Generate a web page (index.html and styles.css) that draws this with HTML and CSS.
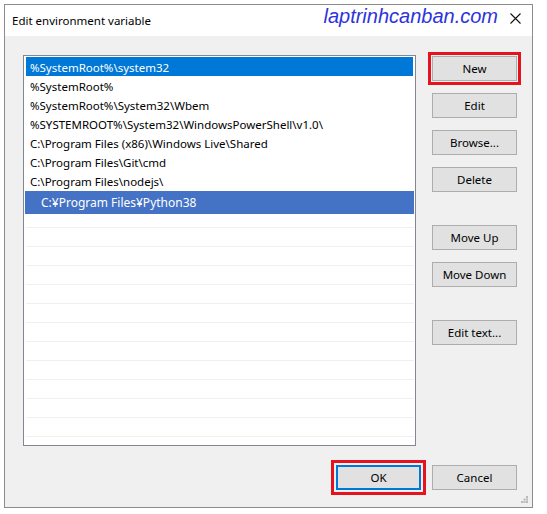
FILE: index.html
```html
<!DOCTYPE html>
<html>
<head>
<meta charset="utf-8">
<link rel="stylesheet" href="styles.css">
</head>
<body>
<div class="window">
  <div class="titlebar">
    <span class="title">Edit environment variable</span>
    <span class="watermark">laptrinhcanban.com</span>
    <svg class="close" width="11" height="11" viewBox="0 0 11 11"><path d="M0.5 0.5 L10.5 10.5 M10.5 0.5 L0.5 10.5" stroke="#111" stroke-width="1.1" fill="none"/></svg>
  </div>
  <div class="body">
    <div class="main">
      <div class="list">
        <div class="row selected">%SystemRoot%\system32</div>
        <div class="row">%SystemRoot%</div>
        <div class="row">%SystemRoot%\System32\Wbem</div>
        <div class="row">%SYSTEMROOT%\System32\WindowsPowerShell\v1.0\</div>
        <div class="row">C:\Program Files (x86)\Windows Live\Shared</div>
        <div class="row">C:\Program Files\Git\cmd</div>
        <div class="row">C:\Program Files\nodejs\</div>
        <div class="row editing">C:¥Program Files¥Python38</div>
        <div class="row empty first"></div>
        <div class="row empty"></div>
        <div class="row empty"></div>
        <div class="row empty"></div>
        <div class="row empty"></div>
        <div class="row empty"></div>
        <div class="row empty"></div>
        <div class="row empty"></div>
        <div class="row empty"></div>
        <div class="row empty"></div>
        <div class="row empty"></div>
        <div class="row empty"></div>
      </div>
      <div class="side">
        <button class="btn marked">New</button>
        <button class="btn">Edit</button>
        <button class="btn">Browse...</button>
        <button class="btn">Delete</button>
        <button class="btn group">Move Up</button>
        <button class="btn">Move Down</button>
        <button class="btn group">Edit text...</button>
      </div>
    </div>
    <div class="footer">
      <button class="btn ok marked-ok">OK</button>
      <button class="btn">Cancel</button>
    </div>
    <svg class="grip" width="7" height="7" viewBox="0 0 7 7">
      <rect x="5" y="0" width="2" height="2" fill="#b8b8b8"/>
      <rect x="2.5" y="2.5" width="2" height="2" fill="#b8b8b8"/>
      <rect x="5" y="2.5" width="2" height="2" fill="#b8b8b8"/>
      <rect x="0" y="5" width="2" height="2" fill="#b8b8b8"/>
      <rect x="2.5" y="5" width="2" height="2" fill="#b8b8b8"/>
      <rect x="5" y="5" width="2" height="2" fill="#b8b8b8"/>
    </svg>
  </div>
</div>
</body>
</html>
```

FILE: styles.css
```css
* { box-sizing: border-box; }
html, body { margin: 0; padding: 0; background: #ffffff; }
body {
  font-family: "Noto Sans", "Open Sans", sans-serif;
  font-size: 11.5px;
  color: #000;
}
.window {
  margin: 4px 0 0 4px;
  width: 529px;
  height: 504px;
  border: 1px solid #8c8c8c;
  background: #f0f0f0;
  display: flex;
  flex-direction: column;
}
.titlebar {
  height: 31px;
  background: #ffffff;
  display: flex;
  align-items: center;
  padding-left: 7px;
  flex: none;
}
.title {
  font-size: 11.5px;
  color: #000;
  margin-top: -1px;
}
.watermark {
  margin-left: auto;
  font-family: "Liberation Sans", Arial, sans-serif;
  font-style: italic;
  font-size: 20px;
  color: #2d34dc;
  margin-top: -8px;
}
.close {
  margin-left: 12px;
  margin-right: 11px;
  margin-top: -5px;
}
.body {
  flex: 1;
  position: relative;
  padding: 19px 0 0 18px;
  display: flex;
  flex-direction: column;
}
.main {
  display: flex;
  gap: 16px;
}
.list {
  width: 393px;
  height: 391px;
  background: #fff;
  border: 1px solid #828790;
  padding: 1px 1px 0 2px;
  overflow: hidden;
}
.row {
  height: 19px;
  line-height: 17px;
  padding-top: 2px;
  padding-left: 4px;
  white-space: nowrap;
}
.row.selected {
  background: #0078d7;
  color: #fff;
  width: 387px;
}
.row.editing {
  background: #4472c4;
  color: #fff;
  height: 23px;
  line-height: 21px;
  padding-top: 1px;
  margin-left: -1px;
  padding-left: 16px;
  font-size: 12px;
  margin-top: 1px;
}
.row.empty {
  border-bottom: 1px solid #f0f0f0;
  padding-top: 0;
}
.row.empty.first { height: 14px; }
.side {
  display: flex;
  flex-direction: column;
  gap: 12px;
  padding-top: 1px;
}
.btn {
  width: 85px;
  height: 25px;
  font-family: "Noto Sans", "Open Sans", sans-serif;
  font-size: 11.5px;
  color: #000;
  background: #e1e1e1;
  border: 1px solid #adadad;
  padding: 0;
  margin: 0;
}
.btn.group { margin-top: 21px; }
.marked {
  outline: 3px solid #e5131d;
  outline-offset: 1px;
}
.footer {
  display: flex;
  justify-content: flex-end;
  gap: 11px;
  margin-top: 19px;
  padding-right: 15px;
}
.btn.ok {
  border: 2px solid #0078d7;
}
.marked-ok {
  outline: 3px solid #e5131d;
  outline-offset: 2px;
}
.grip {
  position: absolute;
  right: 4px;
  bottom: 4px;
}
```
